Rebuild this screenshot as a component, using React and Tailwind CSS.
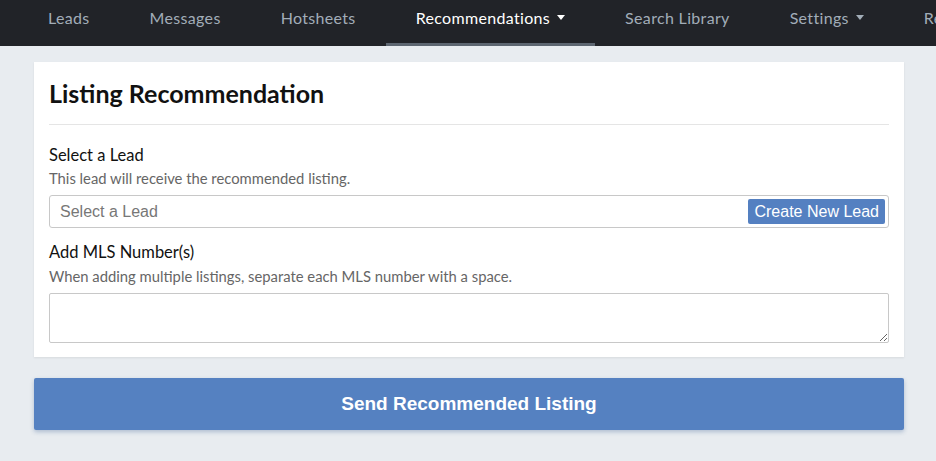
import React from "react";

const navItems = [
  { label: "Leads" },
  { label: "Messages" },
  { label: "Hotsheets" },
  { label: "Recommendations", caret: true, active: true },
  { label: "Search Library" },
  { label: "Settings", caret: true },
  { label: "Reports" },
];

const Caret = () => (
  <span className="ml-[7px] inline-block h-0 w-0 border-x-[4px] border-t-[5px] border-x-transparent border-t-current align-middle" />
);

export default function App() {
  return (
    <div className="min-h-[461px] overflow-hidden bg-[#e8ecf0] font-['Lato',sans-serif]">
      <nav className="h-[46px] overflow-hidden bg-[#212328]">
        <ul className="flex h-full whitespace-nowrap pl-[18px]">
          {navItems.map((item) => (
            <li
              key={item.label}
              className={`flex h-full shrink-0 items-center border-b-[3px] px-[30px] pb-[8px] text-[16px] tracking-[0.33px] ${
                item.active
                  ? "border-[#5d6671] text-white"
                  : "border-transparent text-[#a2adb8]"
              }`}
            >
              {item.label}
              {item.caret && <Caret />}
            </li>
          ))}
        </ul>
      </nav>

      <div className="pl-[34px] pr-[32px] pt-[16px]">
        <div className="bg-white px-[15px] pb-[14px] pt-[16px] shadow-[0_1px_2px_rgba(0,0,0,0.08)]">
          <h1 className="text-[25px] font-bold leading-[30px] text-[#111]">
            Listing Recommendation
          </h1>
          <hr className="mt-[16px] border-[#e5e5e5]" />

          <div className="mt-[19px]">
            <label className="block text-[16.5px] leading-[22px] text-[#111]">
              Select a Lead
            </label>
            <p className="mt-[2px] text-[14.8px] leading-[20px] text-[#666]">
              This lead will receive the recommended listing.
            </p>
            <div className="mt-[7px] flex h-[33px] items-center justify-between rounded-[3px] border border-[#c8c8c8] pl-[10px] pr-[3px] font-['Liberation_Sans',Arial,sans-serif]">
              <span className="text-[16px] text-[#777]">Select a Lead</span>
              <button className="h-[25px] rounded-[2px] bg-[#5480c1] px-[6px] text-[16px] leading-[25px] text-white">
                Create New Lead
              </button>
            </div>
          </div>

          <div className="mt-[13px]">
            <label className="block text-[16.5px] leading-[22px] text-[#111]">
              Add MLS Number(s)
            </label>
            <p className="mt-[3px] text-[14.8px] leading-[20px] text-[#666]">
              When adding multiple listings, separate each MLS number with a space.
            </p>
            <textarea className="mt-[7px] block h-[50px] w-full rounded-[2px] border border-[#c8c8c8] outline-none" />
          </div>
        </div>

        <button className="mt-[21px] h-[52px] w-full rounded-[2px] bg-[#5581c1] font-['Liberation_Sans',Arial,sans-serif] text-[19px] font-bold text-white shadow-[0_2px_4px_rgba(40,80,140,0.3)]">
          Send Recommended Listing
        </button>
      </div>
    </div>
  );
}
